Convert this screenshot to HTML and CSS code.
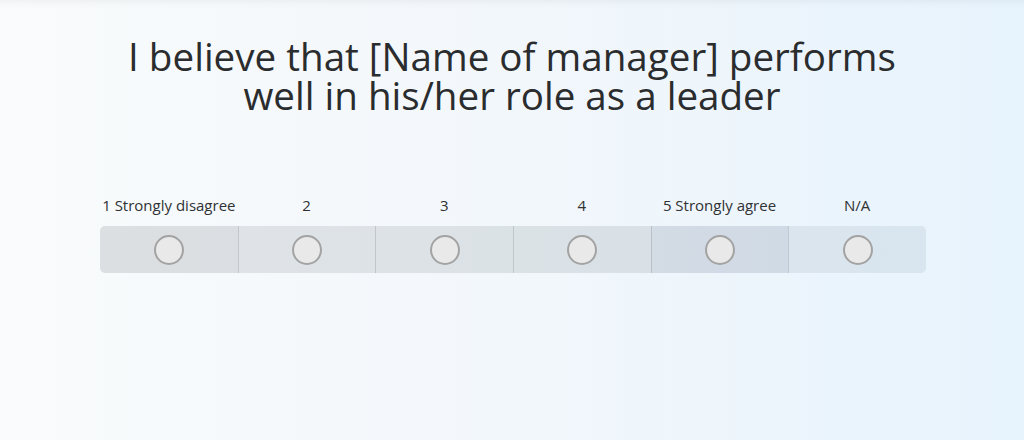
FILE: index.html
```html
<!DOCTYPE html>
<html lang="en">
<head>
<meta charset="utf-8">
<title>Survey question</title>
<link rel="stylesheet" href="styles.css">
</head>
<body>
<main class="page">
  <h1 class="question"><span class="line">I believe that [Name of manager] performs</span><span class="line">well in his/her role as a leader</span></h1>
  <div class="scale">
    <div class="labels">
      <span class="label">1 Strongly disagree</span>
      <span class="label">2</span>
      <span class="label">3</span>
      <span class="label">4</span>
      <span class="label">5 Strongly agree</span>
      <span class="label">N/A</span>
    </div>
    <div class="bar">
      <label class="cell cell-1"><span class="radio"></span></label>
      <label class="cell cell-2"><span class="radio"></span></label>
      <label class="cell cell-3"><span class="radio"></span></label>
      <label class="cell cell-4"><span class="radio"></span></label>
      <label class="cell cell-5"><span class="radio"></span></label>
      <label class="cell cell-6"><span class="radio"></span></label>
    </div>
  </div>
</main>
</body>
</html>
```
FILE: styles.css
```css
html, body {
  margin: 0;
  padding: 0;
  height: 100%;
}
body {
  font-family: "Open Sans", "Liberation Sans", sans-serif;
  color: #2a2c2e;
  background: linear-gradient(90deg, #f9fbfc 0%, #f2f7fb 50%, #e7f3fd 100%);
  overflow: hidden;
}
.page {
  height: 440px;
  box-sizing: border-box;
  padding-top: 37px;
  box-shadow: inset 0 8px 10px -8px rgba(0, 0, 0, 0.08);
}
.question {
  margin: 0;
  text-align: center;
  font-weight: 400;
  font-size: 38.6px;
  line-height: 39px;
  color: #2a2c2e;
}
.line {
  display: block;
}
.scale {
  margin: 80px 0 0 100px;
  width: 826px;
}
.labels {
  display: grid;
  grid-template-columns: repeat(6, 1fr);
  height: 31px;
}
.label {
  text-align: center;
  font-size: 15px;
  line-height: 20px;
  color: #2f3133;
}
.bar {
  display: grid;
  grid-template-columns: repeat(6, 1fr);
  height: 47px;
  border-radius: 5px;
  overflow: hidden;
}
.cell {
  display: flex;
  align-items: center;
  justify-content: center;
  background: rgba(60, 70, 80, 0.12);
  border-left: 1px solid rgba(0, 0, 0, 0.12);
}
.cell-1 {
  border-left: none;
  background: rgba(60, 65, 70, 0.14);
}
.cell-5 {
  background: rgba(40, 60, 90, 0.14);
}
.cell-6 {
  background: rgba(60, 80, 100, 0.09);
}
.radio {
  width: 26px;
  height: 26px;
  border-radius: 50%;
  border: 2px solid #a3a3a3;
  background: #e9e9e9;
}
```
